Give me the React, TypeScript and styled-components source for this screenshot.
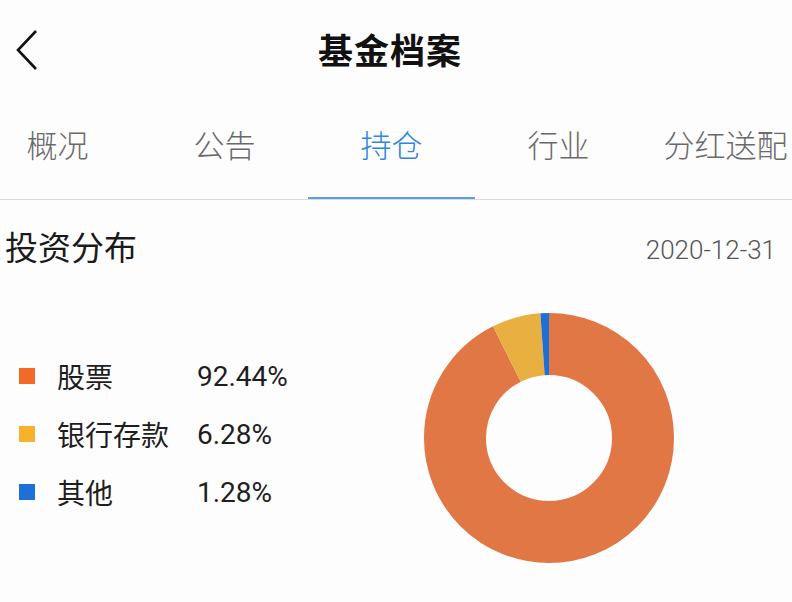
import React from "react";
import styled, { createGlobalStyle } from "styled-components";

const Global = createGlobalStyle`
  html, body { margin: 0; padding: 0; background: #fdfdfe; }
  body { font-family: Roboto, "Noto Sans CJK SC", sans-serif; overflow: hidden; }
`;

const Page = styled.div`
  width: 792px;
  height: 602px;
  background: #fdfdfe;
  overflow: hidden;
`;

const Header = styled.header`
  height: 100px;
  display: grid;
  grid-template-columns: 60px 1fr 72px;
  align-items: center;
`;

const Back = styled.button`
  border: 0;
  background: none;
  padding: 0 0 0 14px;
  display: flex;
  align-items: center;
  height: 100%;
  cursor: pointer;
`;

const Title = styled.h1`
  margin: 0 0 4px;
  text-align: center;
  font-family: "Noto Sans CJK SC", sans-serif;
  font-size: 35px;
  font-weight: 700;
  color: #111;
  letter-spacing: 1px;
`;

const TabBar = styled.nav`
  height: 100px;
  border-bottom: 1px solid #dcdcdf;
  box-sizing: border-box;
  overflow: hidden;
`;

const TabRow = styled.div`
  display: flex;
  height: 100%;
  margin-left: -26px;
`;

const Tab = styled.div<{ $active?: boolean }>`
  flex: 0 0 167px;
  position: relative;
  display: flex;
  align-items: center;
  justify-content: center;
  padding-bottom: 12px;
  box-sizing: border-box;
  font-family: "Noto Sans CJK SC", sans-serif;
  font-size: 31px;
  font-weight: 300;
  white-space: nowrap;
  color: ${(p) => (p.$active ? "#2d86df" : "#6a6a6a")};
  &::after {
    content: "";
    display: ${(p) => (p.$active ? "block" : "none")};
    position: absolute;
    left: 0;
    right: 0;
    bottom: -1px;
    height: 3px;
    background: #5a9fe6;
  }
`;

const SectionHead = styled.div`
  height: 92px;
  display: flex;
  align-items: center;
  justify-content: space-between;
  padding: 0 16px 0 5px;
`;

const Heading = styled.h2`
  margin: 0;
  font-family: "Noto Sans CJK SC", sans-serif;
  font-size: 33px;
  font-weight: 400;
  color: #1a1a1a;
`;

const DateText = styled.span`
  margin-top: 8px;
  font-family: Roboto, sans-serif;
  font-size: 26px;
  font-weight: 300;
  color: #555;
`;

const Content = styled.div`
  display: flex;
  align-items: center;
  padding-left: 19px;
  margin-top: 21px;
`;

const Legend = styled.div`
  width: 405px;
  display: flex;
  flex-direction: column;
  margin-top: -8px;
`;

const LegendRow = styled.div`
  height: 58px;
  display: flex;
  align-items: center;
`;

const Swatch = styled.span<{ $color: string }>`
  width: 16px;
  height: 16px;
  background: ${(p) => p.$color};
  flex: 0 0 16px;
`;

const Label = styled.span`
  width: 140px;
  margin-left: 22px;
  font-family: "Noto Sans CJK SC", sans-serif;
  font-size: 28px;
  font-weight: 400;
  color: #1e1e1e;
`;

const Value = styled.span`
  font-family: Roboto, sans-serif;
  font-size: 28px;
  color: #1e1e1e;
`;

const Chart = styled.svg`
  width: 250px;
  height: 250px;
  flex: 0 0 250px;
`;

const data = [
  { name: "股票", value: 92.44, legend: "#f26a2a", slice: "#e07744" },
  { name: "银行存款", value: 6.28, legend: "#f8b12b", slice: "#e9b041" },
  { name: "其他", value: 1.28, legend: "#1e6fd8", slice: "#1e6fd6" },
];

const tabs = ["概况", "公告", "持仓", "行业", "分红送配"];

function Donut() {
  const r = 94;
  const c = 2 * Math.PI * r;
  let acc = 0;
  return (
    <Chart viewBox="0 0 250 250">
      <g transform="rotate(-90 125 125)">
        {data.map((d) => {
          const len = (d.value / 100) * c;
          const el = (
            <circle
              key={d.name}
              cx={125}
              cy={125}
              r={r}
              fill="none"
              stroke={d.slice}
              strokeWidth={62}
              strokeDasharray={`${len} ${c - len}`}
              strokeDashoffset={-acc}
            />
          );
          acc += len;
          return el;
        })}
      </g>
    </Chart>
  );
}

export default function App() {
  return (
    <Page>
      <Global />
      <Header>
        <Back aria-label="返回">
          <svg width="26" height="42" viewBox="0 0 26 42">
            <polyline points="22,2 4,21 22,40" fill="none" stroke="#111" strokeWidth="2.6" />
          </svg>
        </Back>
        <Title>基金档案</Title>
        <span />
      </Header>
      <TabBar>
        <TabRow>
          {tabs.map((t) => (
            <Tab key={t} $active={t === "持仓"}>
              {t}
            </Tab>
          ))}
        </TabRow>
      </TabBar>
      <SectionHead>
        <Heading>投资分布</Heading>
        <DateText>2020-12-31</DateText>
      </SectionHead>
      <Content>
        <Legend>
          {data.map((d) => (
            <LegendRow key={d.name}>
              <Swatch $color={d.legend} />
              <Label>{d.name}</Label>
              <Value>{d.value.toFixed(2)}%</Value>
            </LegendRow>
          ))}
        </Legend>
        <Donut />
      </Content>
    </Page>
  );
}
